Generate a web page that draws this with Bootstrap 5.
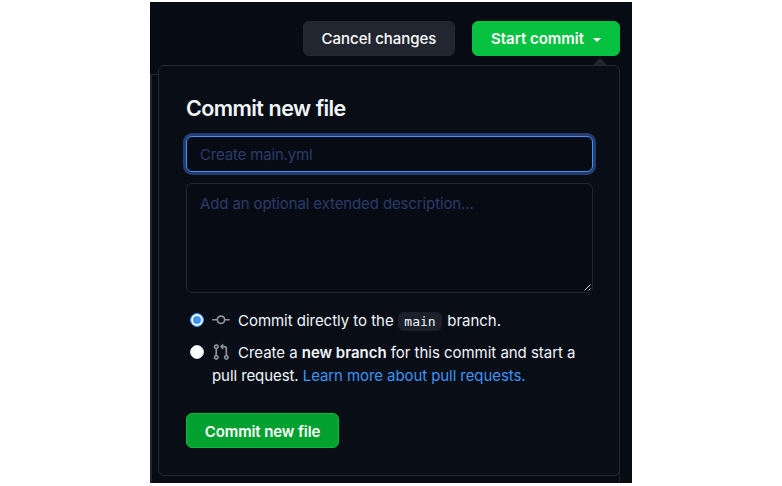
<!DOCTYPE html>
<html lang="en">
<head>
<meta charset="utf-8">
<title>Commit new file</title>
<link href="https://cdn.jsdelivr.net/npm/bootstrap@5.3.0/dist/css/bootstrap.min.css" rel="stylesheet">
<style>
body{font-family:Inter,"Liberation Sans",sans-serif;background:#fff;font-size:15px;color:#f0f6fc;overflow:hidden}
.stage{width:482px;height:481px;margin:2px 0 0 150px;background:#070b14}
.toolbar{height:63px;padding:19px 12px 0 0;gap:17px}
.toolbar .btn,.commit-btn{height:35px;padding:0;border-radius:6px;font-size:15px;font-weight:600;line-height:33px;color:#fff;white-space:nowrap}
.toolbar .btn.cancel-btn{width:152px;background:#212630;border-color:#242933;font-weight:500;letter-spacing:-.03px}
.toolbar .btn.start-btn{width:148px;background:#07c141;border-color:#07c141;letter-spacing:0}
.start-btn::after{margin-left:9px;vertical-align:2px;border-width:4.5px 4.5px 0}
.page-edge{height:418px;padding-left:8px}
.page-edge::before{content:"";position:absolute;left:0;top:9px;width:8px;bottom:0;border-left:2px solid #20252f;border-top:1px solid #20252f}
.page-edge::after{content:"";position:absolute;left:469px;top:405px;width:1px;bottom:0;background:#20252f}
.panel{width:462px;height:411px;border:1px solid #232832;border-radius:6px;padding:27px 26px 0 27px;background:#090d16}
.pointer{right:11px;top:-8px;width:16px;height:8px}
.panel h1{font-size:21.5px;font-weight:600;line-height:30px;margin:0 0 13px;letter-spacing:-.6px;word-spacing:.5px}
.panel .form-control{width:407px;border-radius:6px;padding:0 13px;background:#070b14;border-color:#20252f;color:#f0f6fc;font-size:15px}
.panel .form-control::placeholder{color:#2b3b6a;opacity:1}
.panel .title-box{height:36px;border-color:#3c94f5;box-shadow:0 0 0 3px #273b73;margin-bottom:11px;padding-top:1px;letter-spacing:-.17px}
.panel .desc-box{height:110px;min-height:0;padding-top:9px;line-height:22px;resize:none;letter-spacing:-.12px}
.grip{right:2px;bottom:2px;width:7px;height:7px}
.choice{line-height:23px;white-space:nowrap}
.choice .form-check-input{flex:none;width:14px;height:14px;margin:4px 8px 0 4px;border:1px solid #d4d8dc;background:#fff}
.choice .form-check-input:checked{border:1px solid #3c94f5;background:#3c94f5;box-shadow:inset 0 0 0 2px #fff}
.choice svg{width:18px;height:18px;margin-right:8px;vertical-align:-3px;fill:#8b949e}
.choice code{display:inline-block;height:19px;line-height:20px;padding:0 6.5px;margin:0 1px 0 0;border-radius:6px;background:#1b202a;color:#f0f6fc;font-family:"DejaVu Sans Mono","Liberation Mono",monospace;font-size:13px;letter-spacing:0}
.direct-text{letter-spacing:-.03px}
.t1{letter-spacing:-.03px}
.t2{letter-spacing:-.08px}
.choice a{color:#3c94f5}
.choice b{font-weight:600}
.second-choice{padding-top:1px}
.commit-btn.btn{width:153px;margin-top:26px;padding-top:1px;background:#03a130;border-color:#0cb93f;letter-spacing:-.1px}
</style>
</head>
<body>
<main class="stage">
  <div class="toolbar d-flex justify-content-end">
    <button class="btn cancel-btn">Cancel changes</button>
    <button class="btn start-btn dropdown-toggle">Start commit</button>
  </div>
  <div class="page-edge position-relative">
    <section class="panel position-relative">
      <svg class="pointer position-absolute" viewBox="0 0 16 8"><path d="M0 8 8 0l8 8z" fill="#20252f"/></svg>
      <h1>Commit new file</h1>
      <input class="form-control title-box" placeholder="Create main.yml" aria-label="Commit title">
      <div class="position-relative">
        <textarea class="form-control desc-box d-block" placeholder="Add an optional extended description..." aria-label="Description"></textarea>
        <svg class="grip position-absolute" viewBox="0 0 7 7"><path d="M.5 6.5l6-6M4.5 6.5l2-2" stroke="#c5c8cb" fill="none"/></svg>
      </div>
      <div class="choice first-choice d-flex mt-3">
        <input class="form-check-input" type="radio" name="target" checked aria-label="Commit directly">
        <span class="direct-text"><svg viewBox="0 0 16 16"><path d="M11.93 8.5a4.002 4.002 0 0 1-7.86 0H.75a.75.75 0 0 1 0-1.5h3.32a4.002 4.002 0 0 1 7.86 0h3.32a.75.75 0 0 1 0 1.5zM8 10.25a2.5 2.5 0 1 0 0-5 2.5 2.5 0 0 0 0 5z"/></svg>Commit directly to the <code>main</code> branch.</span>
      </div>
      <div class="choice second-choice d-flex mt-2">
        <input class="form-check-input" type="radio" name="target" aria-label="Create a new branch">
        <span><svg viewBox="0 0 16 16"><path d="M7.177 3.073 9.573.677A.25.25 0 0 1 10 .854v4.792a.25.25 0 0 1-.427.177L7.177 3.427a.25.25 0 0 1 0-.354zM3.75 2.5a.75.75 0 1 0 0 1.5.75.75 0 0 0 0-1.5zm-2.25.75a2.25 2.25 0 1 1 3 2.122v5.256a2.251 2.251 0 1 1-1.5 0V5.372A2.25 2.25 0 0 1 1.5 3.25zM11 2.5h-1V4h1a1 1 0 0 1 1 1v5.628a2.251 2.251 0 1 0 1.5 0V5A2.5 2.5 0 0 0 11 2.5zm1 10.25a.75.75 0 1 1 1.5 0 .75.75 0 0 1-1.5 0zM3.75 12a.75.75 0 1 0 0 1.5.75.75 0 0 0 0-1.5z"/></svg><span class="t1">Create a <b>new branch</b> for this commit and start a</span><br><span class="t2">pull request. <a href="#" class="text-decoration-none">Learn more about pull requests.</a></span></span>
      </div>
      <button class="btn commit-btn">Commit new file</button>
    </section>
  </div>
</main>
<script src="https://cdn.jsdelivr.net/npm/bootstrap@5.3.0/dist/js/bootstrap.bundle.min.js"></script>
</body>
</html>
